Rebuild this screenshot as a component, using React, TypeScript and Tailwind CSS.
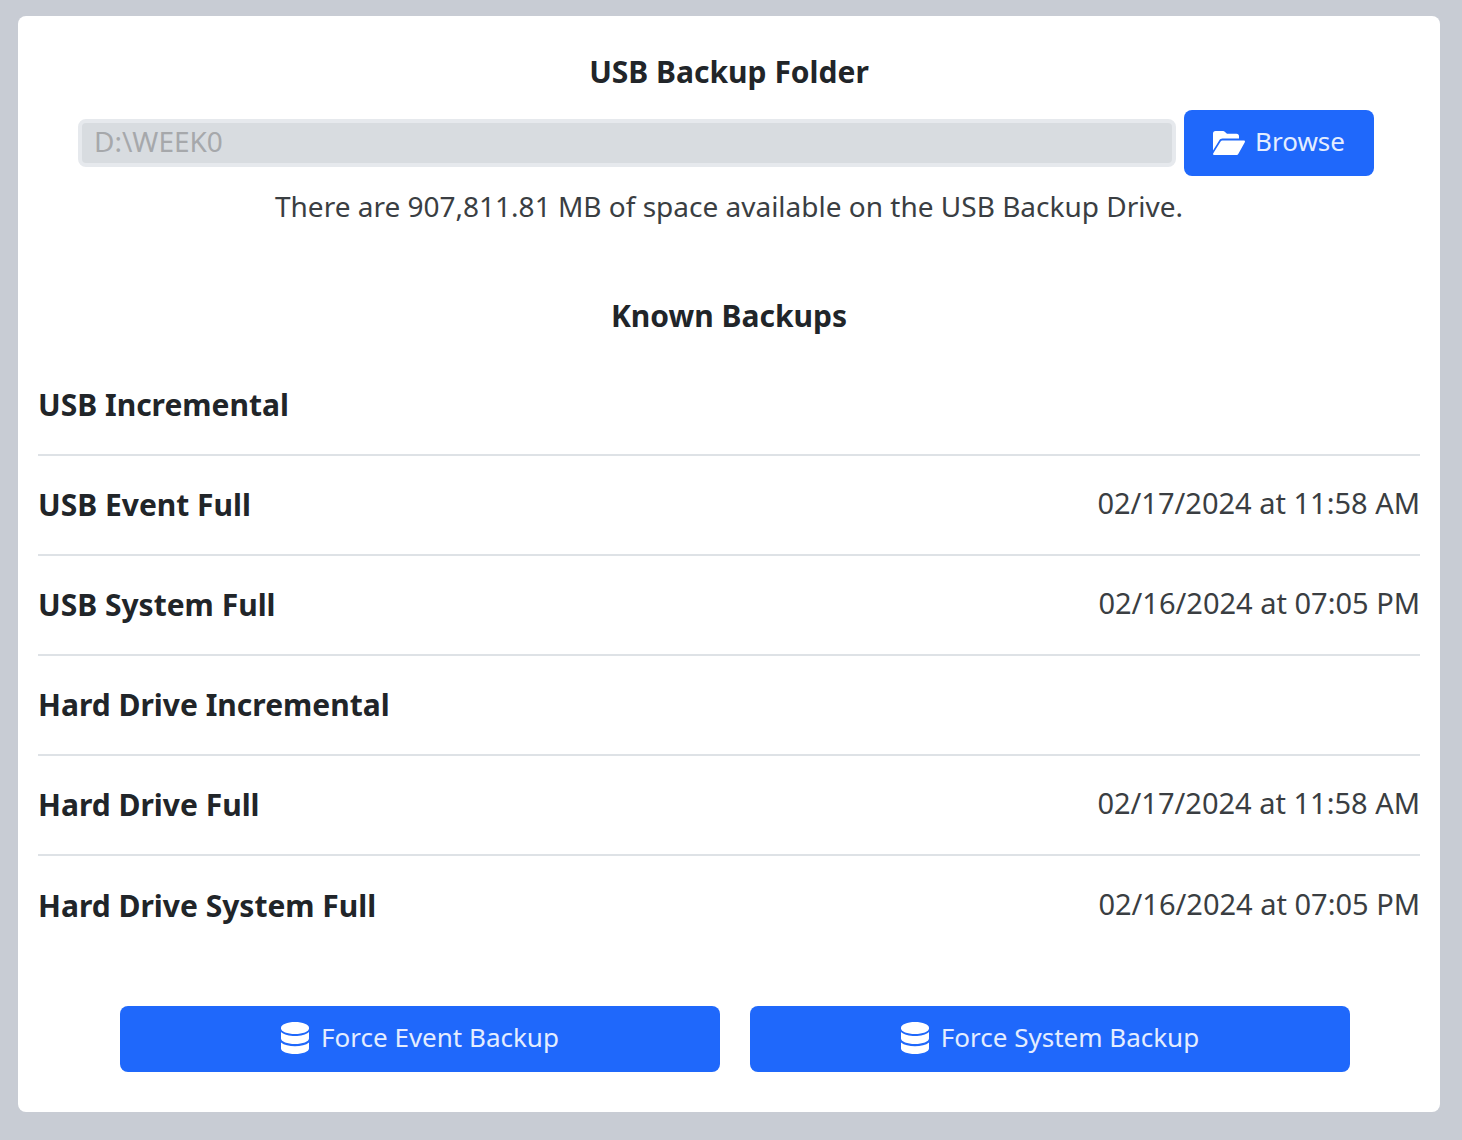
const backups = [
  { name: "USB Incremental", date: "" },
  { name: "USB Event Full", date: "02/17/2024 at 11:58 AM" },
  { name: "USB System Full", date: "02/16/2024 at 07:05 PM" },
  { name: "Hard Drive Incremental", date: "" },
  { name: "Hard Drive Full", date: "02/17/2024 at 11:58 AM" },
  { name: "Hard Drive System Full", date: "02/16/2024 at 07:05 PM" },
];

const forceActions = ["Force Event Backup", "Force System Backup"];

function FolderOpenIcon() {
  return (
    <svg viewBox="0 0 32 24" className="mt-1 h-6 w-8 fill-white" aria-hidden="true">
      <path d="M0 2.5A2.5 2.5 0 0 1 2.5 0H10c.8 0 1.400.3 2 .9L14 2.700h9.500A2.500 2.500 0 0 1 26 5.200V7.500H9.500c-1.400 0-2.600.7-3.300 1.900L0 19.500Z" />
      <path d="M7.600 10.500c.4-.7 1-1 1.800-1H30.800c1 0 1.500.9 1 1.700L25.400 22.800c-.4.8-1.100 1.200-2 1.200H1.200c-.9 0-1.400-.9-.9-1.700Z" />
    </svg>
  );
}

function DatabaseIcon() {
  return (
    <svg viewBox="0 0 28 32" className="mt-[2px] h-8 w-7 fill-white" aria-hidden="true">
      <path d="M0 5.500C0 2.500 6.300 0 14 0S28 2.500 28 5.500V6.500C28 9.500 21.700 12 14 12S0 9.500 0 6.500Z" />
      <path d="M0 10C3 12.800 8.300 14 14 14S25 12.800 28 10V16.500C28 19.500 21.700 22 14 22S0 19.500 0 16.500Z" />
      <path d="M0 20.500C3 23 8.300 24.200 14 24.200S25 23 28 20.500V26.500C28 29.500 21.700 32 14 32S0 29.500 0 26.500Z" />
    </svg>
  );
}

export default function App() {
  return (
    <div className="min-h-screen bg-[#c8ccd4] pt-4 pr-[22px] pb-7 pl-[18px] font-['Noto_Sans',sans-serif] text-[28px] leading-[48px] text-[#212529]">
      <main className="rounded-lg bg-white px-5 pt-8 pb-10">
        <section className="text-center">
          <h2 id="folder-title" className="text-[30px] font-bold">USB Backup Folder</h2>
          <div className="mt-[14px] flex items-center gap-2 pr-[46px] pl-10">
            <input
              type="text"
              disabled
              aria-labelledby="folder-title"
              defaultValue="D:\WEEK0"
              className="h-12 min-w-0 flex-1 rounded-lg border-4 border-[#e6e9ed] bg-[#d8dce0] px-3 pb-1 text-[#a6a8ab]"
            />
            <button type="button" className="flex h-[66px] items-center gap-[10px] rounded-lg bg-[#1f68fb] px-[29px] pb-1 text-[26px] text-[#e4edff]">
              <FolderOpenIcon />
              Browse
            </button>
          </div>
          <p className="mt-[6px] text-[#3a3e42]">
            There are 907,811.81 MB of space available on the USB Backup Drive.
          </p>
        </section>

        <section className="mt-[62px]">
          <h2 className="text-center text-[30px] font-bold">Known Backups</h2>
          <dl className="mt-4 divide-y-2 divide-[#dee2e6]">
            {backups.map((b) => (
              <div key={b.name} className="flex h-[100px] items-center justify-between">
                <dt className="text-[30px] font-bold">{b.name}</dt>
                <dd className="pb-1 text-[29px] text-[#3a3e42]">{b.date}</dd>
              </div>
            ))}
          </dl>
        </section>

        <div className="mt-[50px] grid grid-cols-2 gap-[30px] pr-[70px] pl-[82px]">
          {forceActions.map((label) => (
            <button key={label} type="button" className="flex h-[66px] items-center justify-center gap-3 rounded-lg bg-[#1f68fb] pb-1 text-[26px] text-[#e4edff]">
              <DatabaseIcon />
              {label}
            </button>
          ))}
        </div>
      </main>
    </div>
  );
}
